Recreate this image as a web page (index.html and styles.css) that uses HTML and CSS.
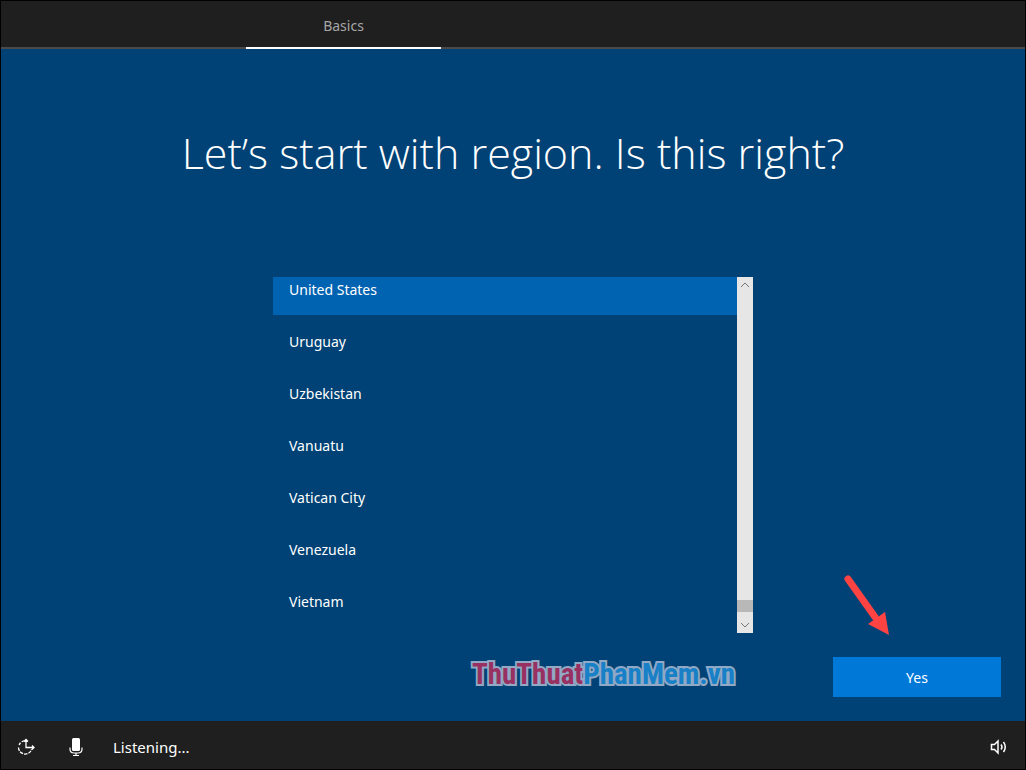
FILE: index.html
```html
<!DOCTYPE html>
<html lang="en">
<head>
<meta charset="utf-8">
<meta name="viewport" content="width=device-width, initial-scale=1">
<title>Windows Setup</title>
<link rel="stylesheet" href="styles.css">
</head>
<body>
<header class="steps">
  <a class="step" href="#basics" aria-current="step">Basics</a>
</header>
<main class="content" id="basics">
  <h1 class="title">Let’s start with region. Is this right?</h1>
  <div class="picker">
    <ul class="regions" role="listbox" aria-label="Region" tabindex="0">
      <li class="region selected" role="option" aria-selected="true">United States</li>
      <li class="region" role="option">Uruguay</li>
      <li class="region" role="option">Uzbekistan</li>
      <li class="region" role="option">Vanuatu</li>
      <li class="region" role="option">Vatican City</li>
      <li class="region" role="option">Venezuela</li>
      <li class="region" role="option">Vietnam</li>
    </ul>
    <div class="scrollbar">
      <button class="scroll-button" type="button" aria-label="Scroll up"><svg width="10" height="6" viewBox="0 0 10 6"><path d="M1 5l4-4 4 4"/></svg></button>
      <div class="track"><div class="thumb"></div></div>
      <button class="scroll-button" type="button" aria-label="Scroll down"><svg width="10" height="6" viewBox="0 0 10 6"><path d="M1 1l4 4 4-4"/></svg></button>
    </div>
  </div>
  <div class="actions">
    <div class="watermark"><span class="brand-red">ThuThuat</span><span class="brand-blue">PhanMem.vn</span></div>
    <button class="confirm" type="button">Yes</button>
    <svg class="pointer" width="48" height="62" viewBox="0 0 48 62" aria-hidden="true"><path d="M7 5l27 38" stroke="#ff4343" stroke-width="7" stroke-linecap="round"/><path d="M27 50l17-12 4 23z" fill="#ff4343"/></svg>
  </div>
</main>
<footer class="taskbar">
  <button class="tool" type="button" aria-label="Ease of Access"><svg width="20" height="20" viewBox="0 0 20 20" fill="none" stroke="#fff" stroke-width="1.300"><path d="M8 3.800A6.500 6.500 0 0 0 3 8.500" stroke-dasharray="2.500 1.500"/><path d="M2.500 10.500a6.700 6.700 0 0 0 13.200 1.500" stroke-dasharray="3.500 1"/><path d="M10 2v8.500h8M8 4.500L10 2.500l2 2M16 8.500l2 2-2 2"/></svg></button>
  <button class="tool" type="button" aria-label="Microphone"><svg width="20" height="20" viewBox="0 0 20 20" fill="none" stroke="#fff" stroke-width="1.200"><rect x="6" y="1" width="8" height="13" rx="1.500" fill="#fff" stroke="none"/><path d="M4 10.500v1.500q0 4 4 4h4q4 0 4-4v-1.500M10 16v2.500M7 18.500h6"/></svg></button>
  <span class="status">Listening...</span>
  <button class="tool volume" type="button" aria-label="Volume"><svg width="20" height="20" viewBox="0 0 20 20" fill="none" stroke="#fff" stroke-width="1.500"><path d="M2.500 7.500h3L9 4v12l-3.500-3.500h-3z"/><path d="M12 7.500q2 2.500 0 5M14.500 5q3.500 5 0 10"/></svg></button>
</footer>
</body>
</html>
```
FILE: styles.css
```css
* { box-sizing: border-box; }

body {
  margin: 0;
  min-height: 100vh;
  display: flex;
  flex-direction: column;
  border: 1px solid #000;
  background: #004275;
  color: #fff;
  font: 14px/22px "Noto Sans", "Open Sans", sans-serif;
}

button {
  border: 0;
  padding: 0;
  background: none;
  color: inherit;
  font: inherit;
}

svg { display: block; fill: none; }

.steps {
  display: flex;
  height: 48px;
  padding-left: 245px;
  background: #1f1f1f;
  box-shadow: inset 0 -2px #4c4a48;
}

.step {
  width: 195px;
  border-bottom: 2px solid #fff;
  color: #a6a6a6;
  line-height: 50px;
  text-align: center;
  text-decoration: none;
}

.content {
  flex: 1;
  display: flex;
  flex-direction: column;
  align-items: center;
  padding: 72px 24px 24px;
}

.title {
  margin: 0 0 92px;
  font: 300 43px/64px "Open Sans", "Noto Sans", sans-serif;
  text-align: center;
}

.picker {
  display: flex;
  width: 480px;
  max-width: 100%;
  height: 356px;
}

.regions {
  flex: 1;
  margin: 0;
  padding: 0;
  list-style: none;
  outline: 0;
}

.region {
  height: 52px;
  padding: 16px;
}

.selected {
  height: 38px;
  padding-top: 2px;
  background: #0063b1;
}

.scrollbar {
  display: flex;
  flex-direction: column;
  width: 16px;
  background: #e6e6e6;
}

.scroll-button {
  display: grid;
  place-items: center;
  height: 16px;
  stroke: #777;
}

.track {
  flex: 1;
  display: flex;
  flex-direction: column;
  justify-content: flex-end;
  padding-bottom: 5px;
}

.thumb {
  height: 12px;
  background: #b8b8b8;
}

.actions {
  position: relative;
  align-self: stretch;
  display: flex;
  justify-content: flex-end;
  gap: 98px;
  margin-top: auto;
}

.watermark {
  font: bold 29px/34px "Roboto Condensed", Roboto, "Liberation Sans", sans-serif;
  -webkit-text-stroke: 4px #91a9c4;
  paint-order: stroke fill;
}

.brand-red { color: #983062; }
.brand-blue { color: #1780c7; }

.confirm {
  width: 168px;
  height: 40px;
  padding-top: 2px;
  background: #0078d7;
}

.pointer {
  position: absolute;
  right: 112px;
  bottom: 61px;
}

.taskbar {
  display: flex;
  align-items: center;
  height: 48px;
  padding: 4px 16px 0 15px;
  background: #1f1f1f;
  font-size: 15px;
}

.tool { margin-right: 30px; }
.status { margin-left: -3px; }
.volume { margin: 0 0 0 auto; }
```
